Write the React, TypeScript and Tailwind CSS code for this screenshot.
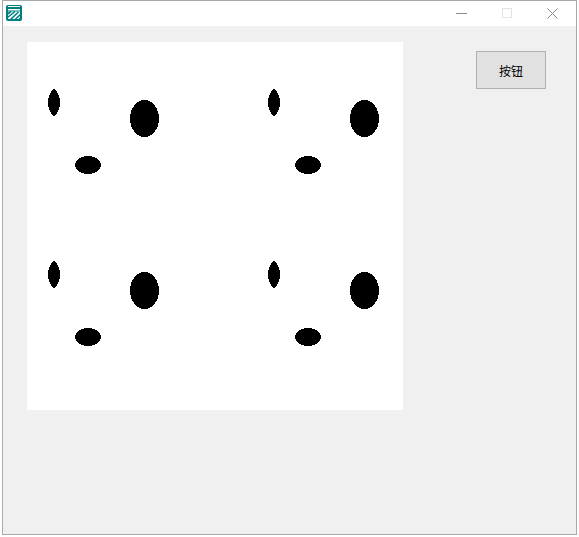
const tiles = [
  { x: 0, y: 0 },
  { x: 220, y: 0 },
  { x: 0, y: 172 },
  { x: 220, y: 172 },
];

function AppIcon() {
  return (
    <svg width="16" height="16" viewBox="0 0 16 16" className="block">
      <rect x="0" y="0" width="16" height="16" rx="2" fill="#007f7f" />
      <rect x="2" y="1" width="12" height="1" fill="#fff" />
      <rect x="2" y="4" width="12" height="1.5" fill="#fff" />
      <rect x="2" y="6.5" width="12" height="7.5" fill="#fff" />
      <path d="M1.5 9 L5 6.5 M1.5 12.5 L9 6.5 M4 15 L12.5 7 M8.5 15 L15 9 M12.5 15 L15 12.5" stroke="#007f7f" strokeWidth="1.6" fill="none" />
    </svg>
  );
}

export default function App() {
  return (
    <div className="w-[579px] h-[537px] bg-white pl-[2px] font-['Noto_Sans_CJK_SC',sans-serif]">
      <div className="w-[575px] h-[535px] flex flex-col border border-[#a9a9a9]">
        {/* title bar */}
        <div className="h-[25px] pb-[1px] bg-white flex items-center pl-[3px]">
          <AppIcon />
          <div className="ml-auto flex items-center pr-[1px]">
            <div className="w-[46px] flex justify-center">
              <svg width="11" height="11" viewBox="0 0 11 11">
                <path d="M0 5.5 H11" stroke="#8c8c8c" strokeWidth="1" />
              </svg>
            </div>
            <div className="w-[45px] flex justify-center">
              <div className="w-[10px] h-[10px] border border-[#e3e3e3]" />
            </div>
            <div className="w-[46px] flex justify-center">
              <svg width="11" height="11" viewBox="0 0 11 11">
                <path d="M0.5 0.5 L10.5 10.5 M10.5 0.5 L0.5 10.5" stroke="#8c8c8c" strokeWidth="1" />
              </svg>
            </div>
          </div>
        </div>

        {/* client area */}
        <div className="flex-1 bg-[#f0f0f0] flex items-start pl-[24px] pt-[16px]">
          <div className="w-[376px] h-[368px] bg-white">
            <svg width="376" height="368" viewBox="0 0 376 368" className="block" shapeRendering="crispEdges">
              {tiles.map((t) => (
                <g key={`${t.x}-${t.y}`} transform={`translate(${t.x} ${t.y})`}>
                  <path d="M27 46 C30 48.5 33 54 33 60.5 C33 67 30 72.5 27 75 C24 72.5 21 67 21 60.5 C21 54 24 48.5 27 46 Z" fill="#000" />
                  <ellipse cx="117.5" cy="76.5" rx="14.5" ry="18.5" fill="#000" />
                  <ellipse cx="61" cy="123" rx="13" ry="9" fill="#000" />
                </g>
              ))}
            </svg>
          </div>
          <button className="ml-[73px] mt-[9px] w-[70px] h-[38px] pt-[2px] bg-[#e1e1e1] border border-[#b0b0b0] text-[12px] text-black flex items-center justify-center">
            按钮
          </button>
        </div>
      </div>
    </div>
  );
}
